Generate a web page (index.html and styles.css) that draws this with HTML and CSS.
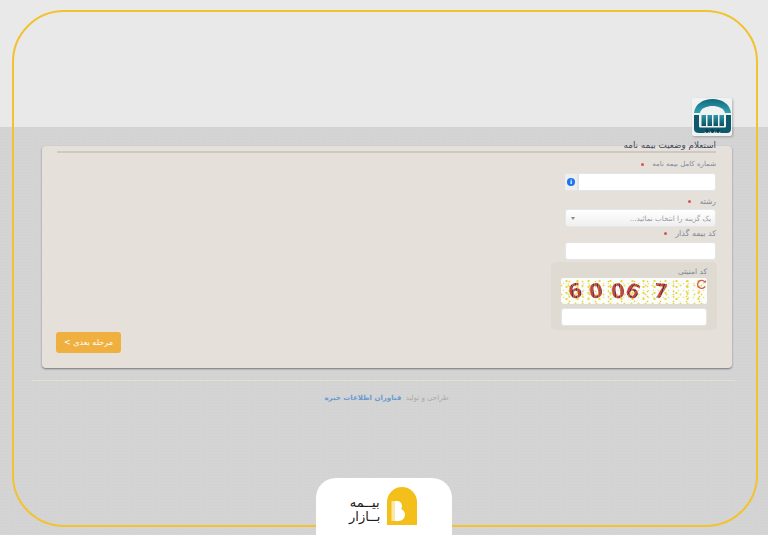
FILE: index.html
```html
<!DOCTYPE html>
<html lang="fa" dir="rtl">
<head>
<meta charset="utf-8">
<title>استعلام وضعیت بیمه نامه</title>
<link rel="stylesheet" href="styles.css">
</head>
<body>
<div class="page">
  <main class="wrap">
    <div class="logo-row">
      <svg class="logo" viewBox="0 0 40 38" width="40" height="38" aria-hidden="true">
        <defs>
          <linearGradient id="arch" x1="0" y1="0" x2="0" y2="1">
            <stop offset="0" stop-color="#0e6a7c"/>
            <stop offset="1" stop-color="#37a3b4"/>
          </linearGradient>
          <linearGradient id="bar" x1="0" y1="0" x2="0" y2="1">
            <stop offset="0" stop-color="#2f98ab"/>
            <stop offset="1" stop-color="#0c4f62"/>
          </linearGradient>
        </defs>
        <rect width="40" height="38" rx="2" fill="#f1f2f2"/>
        <path d="M2 15C3 6 11 1 20.500 1S38 6 39 15h-6C32 10 26 8 20.500 8S9 10 8 15Z" fill="url(#arch)"/>
        <path d="M2 17h5v11c0 1 .5 1.500 1.500 1.500h24c1 0 1.500-.5 1.500-1.500V17h5v14c0 2.500-1.500 4-4 4H7c-3 0-5-1.500-5-4Z" fill="#0d5a6d"/>
        <path d="M9.500 17h4.500v11H9.500ZM15.500 17h4.500v11h-4.500ZM21.500 17h4.500v11h-4.500ZM27.500 17h4.500v11h-4.500Z" fill="url(#bar)"/>
        <circle cx="15" cy="35" r="2.400" fill="#f1f2f2"/><circle cx="20.500" cy="35" r="2.400" fill="#f1f2f2"/><circle cx="26" cy="35" r="2.400" fill="#f1f2f2"/>
        <circle cx="15" cy="33" r="2" fill="#0b3f50"/><circle cx="20.500" cy="33" r="2" fill="#0b3f50"/><circle cx="26" cy="33" r="2" fill="#0b3f50"/>
      </svg>
    </div>
    <h1 class="title">استعلام وضعیت بیمه نامه</h1>
    <section class="card">
      <div class="rule"></div>
      <form class="form">
        <label class="label label-first">شماره کامل بیمه نامه <span class="req"></span></label>
        <div class="input-group">
          <input class="input" type="text">
          <span class="addon"><span class="info">i</span></span>
        </div>
        <label class="label label-select">رشته <span class="req"></span></label>
        <div class="select"><span>یک گزینه را انتخاب نمائید...</span><span class="caret"></span></div>
        <label class="label label-agent">کد بیمه گذار <span class="req"></span></label>
        <input class="input plain" type="text">
        <div class="captcha-box">
          <div class="captcha-label">کد امنیتی</div>
          <div class="captcha" dir="ltr">
            <span class="d d1">6</span><span class="d d2">0</span><span class="d d3">0</span><span class="d d4">6</span><span class="d d5">7</span>
            <svg class="reload" viewBox="0 0 12 12" width="11" height="11" aria-hidden="true"><path d="M9.800 3.500A4.400 4.400 0 1 0 10 8" fill="none" stroke="#d8584f" stroke-width="1.400"/><path d="M8 3.800h3V1Z" fill="#d8584f"/></svg>
          </div>
          <input class="input captcha-input" type="text">
        </div>
      </form>
      <div class="actions"><button class="next" type="button">مرحله بعدی &gt;</button></div>
    </section>
    <footer class="footer">طراحی و تولید&nbsp; <b>فناوران اطلاعات خبره</b></footer>
  </main>
  <div class="frame"></div>
  <div class="tab">
    <div class="brand-text"><span>بیــمه</span><span>بــازار</span></div>
    <svg class="brand-mark" viewBox="0 0 30 38" width="30" height="38" aria-hidden="true">
      <path d="M0 38V15a15 15 0 0 1 30 0v23Z" fill="#f4bf1a"/>
      <path d="M4.500 14H8v20H4.500Z" fill="#fbe9a6"/>
      <path d="M8 14h2c3 0 5 2.200 5 5 0 1.200-.3 2.200-.9 3 2.300 1 3.900 3 3.900 5.500 0 3.700-2.900 6.500-6.500 6.500H8Z" fill="#fff"/>
    </svg>
  </div>
</div>
</body>
</html>
```
FILE: styles.css
```css
* { box-sizing: border-box; }
html, body { margin: 0; padding: 0; }
body {
  font-family: "DejaVu Sans", "Noto Sans", sans-serif;
  width: 768px;
  height: 535px;
  overflow: hidden;
  background-color: #d3d3d3;
}
.page {
  position: relative;
  width: 768px;
  height: 535px;
  overflow: hidden;
  background:
    linear-gradient(#e9e9e9, #e9e9e9) top / 100% 127px no-repeat,
    radial-gradient(circle, #cfcfcf 0.8px, transparent 1px) 0 0 / 3px 3px,
    #d4d4d4;
}
.wrap { padding: 98px 36px 0 36px; display: flex; flex-direction: column; }
.logo-row { display: flex; justify-content: flex-start; height: 38px; }
.logo { filter: drop-shadow(1px 1px 1px rgba(0,0,0,.25)); }
.title {
  position: relative;
  z-index: 1;
  margin: 1px 16px 0 0;
  height: 16px;
  font-size: 8.800px;
  line-height: 16px;
  font-weight: 400;
  color: #45485a;
}
.card {
  margin: -7px 0 0 6px;
  height: 222px;
  background: #e5e1da;
  border-radius: 4px;
  box-shadow: 0 1px 2px rgba(0,0,0,.45);
  padding: 5px 16px 0 15px;
}
.rule { height: 2px; background: #cdc9c1; }
.form { display: flex; flex-direction: column; align-items: flex-start; width: 167px; height: 177px; }
.label {
  height: 13px;
  margin-top: 5px;
  font-size: 7.500px;
  line-height: 13px;
  color: #7f8a99;
  white-space: nowrap;
}
.label-first { font-size: 7px; }
.req {
  display: inline-block;
  width: 3px;
  height: 3px;
  border-radius: 50%;
  background: #cf5a50;
  margin-right: 6px;
  vertical-align: middle;
}
.label-select { margin-top: 6px; height: 9px; line-height: 9px; }
.label-agent { margin-top: 1px; height: 12px; line-height: 12px; font-size: 8px; }
.label-select + .select { margin-top: 3px; }
.input-group { display: flex; width: 151px; height: 18px; border-radius: 3px; overflow: hidden; margin-top: 2px; }
.input {
  display: block;
  border: 1px solid #e4e4e4;
  background: #fff;
  border-radius: 3px;
  padding: 0;
  margin: 0;
}
.input-group .input { flex: 1; min-width: 0; border-radius: 0 3px 3px 0; }
.addon {
  width: 13px;
  background: #eeeeee;
  border: 1px solid #e4e4e4;
  border-left: 0;
  display: flex;
  align-items: center;
  justify-content: center;
  order: 1;
}
.info {
  width: 8px; height: 8px; border-radius: 50%;
  background: #1a73f0; color: #fff;
  font: bold 6px/8px "DejaVu Sans", sans-serif;
  text-align: center;
}
.select {
  width: 151px;
  height: 18px;
  border-radius: 3px;
  background: linear-gradient(#ffffff, #efefef);
  border: 1px solid #e6e6e6;
  display: flex;
  align-items: center;
  justify-content: space-between;
  padding: 0 4px 0 5px;
  font-size: 7.200px;
  color: #9a9a9a;
}
.caret { width: 0; height: 0; border: 2.500px solid transparent; border-top: 3px solid #8a8a8a; border-bottom: 0; }
.plain { width: 151px; height: 18px; margin-top: 2px; }
.captcha-box {
  width: 166px;
  height: 68px;
  margin: 2px -1px 0 0;
  background: #dfdad2;
  border-radius: 5px;
  padding: 3px 10px 0;
}
.captcha-label { height: 13px; font-size: 7.500px; line-height: 13px; color: #7f8a99; }
.captcha {
  position: relative;
  display: flex;
  align-items: center;
  width: 146px;
  height: 26px;
  border-radius: 2px;
  overflow: hidden;
  padding-left: 7px;
  background:
    radial-gradient(circle, #e8d43c 0.9px, transparent 1.300px) 0 0 / 11px 6px,
    radial-gradient(circle, #eadc66 0.8px, transparent 1.200px) 4px 3px / 7px 9px,
    radial-gradient(circle, #e3cf45 0.7px, transparent 1.100px) 2px 1px / 13px 5px,
    radial-gradient(circle, #efe58a 0.7px, transparent 1.100px) 5px 2px / 5px 7px,
    #fafdfa;
}
.d {
  display: block;
  font: bold 20px/26px "DejaVu Sans", sans-serif;
  background: repeating-linear-gradient(100deg, #c9413a 0 2px, #4f3a5c 2px 3px, #c9683a 3px 4px);
  -webkit-background-clip: text;
  background-clip: text;
  color: transparent;
}
.d1 { transform: rotate(-14deg); }
.d2 { transform: rotate(-10deg); margin-left: 7px; }
.d3 { transform: rotate(-8deg); margin-left: 8px; }
.d4 { transform: rotate(24deg); margin-left: 1px; }
.d5 { transform: rotate(6deg); margin-left: 14px; }
.reload { position: absolute; top: 1px; right: 0; }
.captcha-input { width: 146px; height: 18px; margin-top: 4px; }
.actions { display: flex; justify-content: flex-end; margin: 2px 0 0 -1px; }
.next {
  width: 65px;
  height: 21px;
  border: 0;
  border-radius: 3px;
  background: #f0b040;
  color: #fff;
  font: 400 8px/21px "DejaVu Sans", sans-serif;
  padding: 0;
}
.footer {
  margin: 12px -3px 0 -4px;
  border-top: 1px solid #e2e0d4;
  padding: 10px 0 0 6px;
  text-align: center;
  font-size: 7px;
  line-height: 14px;
  color: #a9a9a9;
}
.footer b { color: #6a9bd0; }
.frame {
  position: absolute;
  left: 12px;
  top: 10px;
  width: 746px;
  height: 517px;
  border: 2px solid #f2c230;
  border-radius: 52px;
  pointer-events: none;
}
.tab {
  position: absolute;
  left: 316px;
  top: 478px;
  width: 136px;
  height: 57px;
  background: #fff;
  border-radius: 20px 20px 0 0;
  padding: 9px 35px 0 33px;
  display: flex;
  align-items: flex-start;
  justify-content: space-between;
}
.brand-mark { order: -1; }
.brand-text {
  display: flex;
  flex-direction: column;
  align-items: center;
  margin-top: 9px;
  font-size: 13px;
  line-height: 14px;
  color: #1b1b1b;
}
```
